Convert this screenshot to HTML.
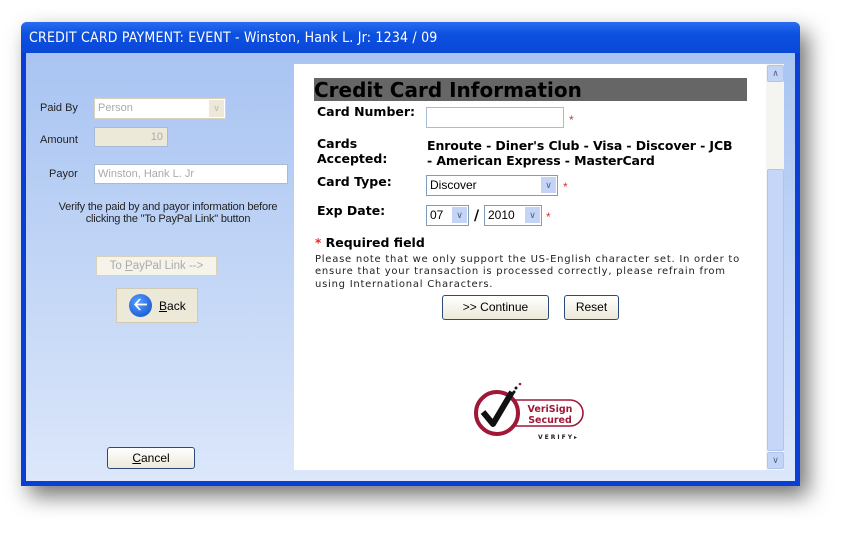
<!DOCTYPE html>
<html><head><style>
body{margin:0;width:855px;height:538px;background:#fff;position:relative;overflow:hidden;font-family:"Liberation Sans",sans-serif}
.abs{position:absolute}
#win{left:21px;top:22px;width:779px;height:464px;background:#0a3fd6;box-shadow:8px 10px 22px rgba(0,0,0,.55);border-radius:6px 6px 0 0}
#title{left:21px;top:22px;width:779px;height:31px;background:linear-gradient(#2a6cf0,#0c50e0 40%,#0a48d8);border-radius:6px 6px 0 0;color:#fff;font-size:14px;line-height:33px;text-indent:8px;font-family:"DejaVu Sans Condensed","Liberation Sans",sans-serif;letter-spacing:0.2px}
#client{left:26px;top:53px;width:769px;height:428px;background:linear-gradient(#a8c4f2,#dce7fa)}
.lbl{font-size:11px;color:#222}
.inp{background:#fff;border:1px solid #a7bad6;font-size:11px;color:#aaa;box-sizing:border-box;padding-left:3px}
#panel{left:294px;top:64px;width:472px;height:406px;background:#fff}
#sb{left:766px;top:64px;width:18px;height:406px;background:#f4f4f1}
.b{font-weight:bold;font-family:"DejaVu Sans","Liberation Sans",sans-serif;font-size:12.5px;color:#000}
.sel{border:1px solid #7f9db9;background:#fff;box-sizing:border-box;font-size:12px;padding-left:3px;line-height:18px}
.arr{position:absolute;right:1px;top:1px;width:15px;height:16px;background:#c3d4f7;color:#4d6185;font-size:9px;text-align:center;line-height:16px}
.star{color:#e03030;font-size:12px}
.btn{border:1px solid #2b4a7a;border-radius:3px;background:linear-gradient(#fff,#ece9d8);font-size:12px;text-align:center;box-sizing:border-box}
</style></head><body>
<div id="win" class="abs"></div>
<div id="title" class="abs">CREDIT CARD PAYMENT: EVENT - Winston, Hank L. Jr: 1234 / 09</div>
<div id="client" class="abs"></div>
<div class="abs lbl" style="left:40px;top:102px">Paid By</div>
<div class="abs inp" style="left:94px;top:98px;width:132px;height:21px;line-height:19px;border-color:#d8d2bd">Person<span style="position:absolute;right:1px;top:1px;width:15px;height:17px;background:#ece9d8;color:#bbb;font-size:9px;text-align:center;line-height:17px">&#8744;</span></div>
<div class="abs lbl" style="left:40px;top:134px">Amount</div>
<div class="abs inp" style="left:94px;top:127px;width:74px;height:20px;background:#ece9d8;text-align:right;padding-right:4px;line-height:18px">10</div>
<div class="abs lbl" style="left:49px;top:168px">Payor</div>
<div class="abs inp" style="left:94px;top:164px;width:194px;height:20px;line-height:18px">Winston, Hank L. Jr</div>
<div class="abs lbl" style="left:38px;top:201px;width:260px;text-align:center;font-size:11px;line-height:12px;letter-spacing:-0.2px">Verify the paid by and payor information before<br>clicking the "To PayPal Link" button</div>
<div class="abs" style="left:96px;top:256px;width:121px;height:20px;border:1px solid #d8d2bd;background:#f5f3ea;color:#aaa;font-size:11.5px;text-align:center;line-height:19px;box-sizing:border-box">To <u>P</u>ayPal Link --&gt;</div>
<div class="abs" style="left:116px;top:288px;width:82px;height:35px;background:#ece9d8;border:1px solid #cfc9b4;box-sizing:border-box;font-size:12px"><div style="position:absolute;left:12px;top:5px;width:23px;height:23px;border-radius:50%;background:radial-gradient(circle at 40% 35%,#5aa0ff,#0a48c8);color:#fff;font-size:17px;text-align:center;line-height:22px;font-weight:bold">&#129120;</div><span style="position:absolute;left:42px;top:10px"><u>B</u>ack</span></div>
<div class="abs btn" style="left:107px;top:447px;width:88px;height:22px;line-height:20px"><u>C</u>ancel</div>
<div id="panel" class="abs"></div>
<div id="sb" class="abs"><div style="position:absolute;left:1px;top:1px;width:15px;height:15px;background:#c3d4f7;border:1px solid #b0c4ec;border-radius:2px;color:#4d6185;font-size:9px;text-align:center;line-height:15px">&#8743;</div><div style="position:absolute;left:1px;top:105px;width:15px;height:280px;background:#c6d6f8;border:1px solid #b0c4ec;border-radius:2px"></div><div style="position:absolute;left:1px;top:388px;width:15px;height:15px;background:#c3d4f7;border:1px solid #b0c4ec;border-radius:2px;color:#4d6185;font-size:9px;text-align:center;line-height:15px">&#8744;</div></div>
<div class="abs" style="left:314px;top:78px;width:433px;height:23px;background:#666;font-weight:bold;font-family:'DejaVu Sans',sans-serif;font-size:20px;line-height:25px;color:#000;letter-spacing:0px">Credit Card Information</div>
<div class="abs b" style="left:317px;top:104px">Card Number:</div>
<div class="abs sel" style="left:426px;top:107px;width:138px;height:21px;border-color:#a7bad6"></div><span class="abs star" style="left:569px;top:113px">*</span>
<div class="abs b" style="left:317px;top:136px;line-height:15px">Cards<br>Accepted:</div>
<div class="abs b" style="left:427px;top:138px;line-height:15px;letter-spacing:-0.1px">Enroute - Diner's Club - Visa - Discover - JCB<br>- American Express - MasterCard</div>
<div class="abs b" style="left:317px;top:174px">Card Type:</div>
<div class="abs sel" style="left:426px;top:175px;width:132px;height:21px">Discover<span class="arr">&#8744;</span></div><span class="abs star" style="left:563px;top:180px">*</span>
<div class="abs b" style="left:317px;top:203px">Exp Date:</div>
<div class="abs sel" style="left:426px;top:205px;width:43px;height:21px">07<span class="arr">&#8744;</span></div>
<div class="abs b" style="left:474px;top:208px;font-size:14px">/</div>
<div class="abs sel" style="left:484px;top:205px;width:58px;height:21px">2010<span class="arr">&#8744;</span></div><span class="abs star" style="left:546px;top:210px">*</span>
<div class="abs b" style="left:315px;top:235px"><span class="star">*</span> Required field</div>
<div class="abs" style="left:315px;top:254px;font-family:'DejaVu Sans',sans-serif;font-size:10px;letter-spacing:0.75px;line-height:12.3px;color:#222;width:470px;white-space:nowrap">Please note that we only support the US-English character set. In order to<br>ensure that your transaction is processed correctly, please refrain from<br>using International Characters.</div>
<div class="abs btn" style="left:442px;top:295px;width:107px;height:25px;line-height:23px">&gt;&gt; Continue</div>
<div class="abs btn" style="left:564px;top:295px;width:55px;height:25px;line-height:23px">Reset</div>
<svg class="abs" style="left:470px;top:378px" width="120" height="62">
<circle cx="27" cy="35" r="21" fill="none" stroke="#a01838" stroke-width="4"/>
<path d="M44 22 H100 a13 13 0 0 1 0 26 H44" fill="none" stroke="#a01838" stroke-width="1.6"/>
<path d="M13 34 L23 46 L42 14" fill="none" stroke="#111" stroke-width="6" stroke-linejoin="round"/>
<circle cx="46" cy="10" r="1.5" fill="#111"/><circle cx="50" cy="6" r="1.3" fill="#a01838"/><circle cx="44" cy="14" r="1.5" fill="#111"/>
<text x="80" y="34" text-anchor="middle" font-family="DejaVu Sans,sans-serif" font-weight="bold" font-size="9.5" fill="#a01838">VeriSign</text>
<text x="80" y="45" text-anchor="middle" font-family="DejaVu Sans,sans-serif" font-weight="bold" font-size="9.5" fill="#a01838">Secured</text>
<text x="68" y="61" font-family="DejaVu Sans,sans-serif" font-weight="bold" font-size="6" letter-spacing="2" fill="#222">VERIFY▸</text>
</svg>
</body></html>
